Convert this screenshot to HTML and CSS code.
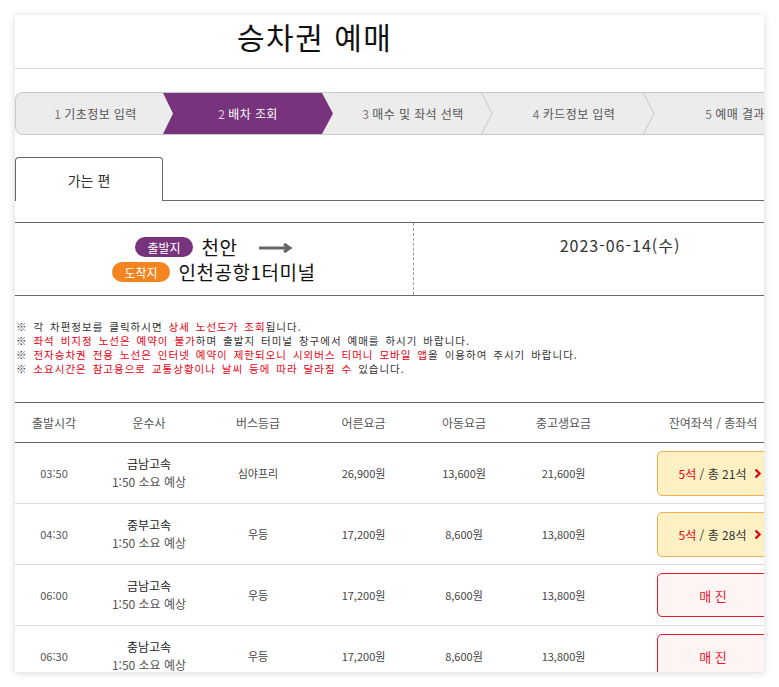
FILE: index.html
```html
<!DOCTYPE html>
<html lang="ko">
<head>
<meta charset="utf-8">
<title>승차권 예매</title>
<link rel="stylesheet" href="styles.css">
</head>
<body>
<div class="card">
  <div class="content">
    <h1 class="title">승차권 예매</h1>

    <ol class="steps">
      <li class="step step-first"><span class="num">1</span>기초정보 입력</li>
      <li class="step active"><span class="num">2</span>배차 조회</li>
      <li class="step"><span class="num">3</span>매수 및 좌석 선택<svg class="sep" viewBox="0 0 12 41" preserveAspectRatio="none"><polyline points="0.5,0 11,20.5 0.5,41"/></svg></li>
      <li class="step step-4"><span class="num">4</span>카드정보 입력<svg class="sep" viewBox="0 0 12 41" preserveAspectRatio="none"><polyline points="0.5,0 11,20.5 0.5,41"/></svg></li>
      <li class="step"><span class="num">5</span>예매 결과</li>
    </ol>

    <div class="tabs">
      <div class="tab">가는 편</div>
    </div>

    <div class="route">
      <div class="route-left">
        <div class="route-line">
          <span class="badge badge-dep">출발지</span>
          <span class="place">천안</span>
          <svg class="arrow" viewBox="0 0 34 10" width="34" height="10"><line x1="0" y1="5" x2="29" y2="5"/><polyline points="25,1 31,5 25,9"/></svg>
        </div>
        <div class="route-line">
          <span class="badge badge-arr">도착지</span>
          <span class="place">인천공항1터미널</span>
        </div>
      </div>
      <div class="route-right">2023-06-14(수)</div>
    </div>

    <ul class="notes">
      <li>※ 각 차편정보를 클릭하시면 <em>상세 노선도가 조회</em>됩니다.</li>
      <li>※ <em>좌석 비지정 노선은 예약이 불가</em>하며 출발지 터미널 창구에서 예매를 하시기 바랍니다.</li>
      <li>※ <em>전자승차권 전용 노선은 인터넷 예약이 제한되오니 시외버스 티머니 모바일 앱</em>을 이용하여 주시기 바랍니다.</li>
      <li>※ <em>소요시간은 참고용으로 교통상황이나 날씨 등에 따라 달라질 수</em> 있습니다.</li>
    </ul>

    <div class="table">
      <div class="row head">
        <div>출발시각</div><div>운수사</div><div>버스등급</div><div>어른요금</div><div>아동요금</div><div>중고생요금</div><div>잔여좌석 / 총좌석</div>
      </div>
      <div class="row">
        <div class="time">03:50</div>
        <div class="company"><b>금남고속</b><span>1:50 소요 예상</span></div>
        <div class="cell">심야프리</div>
        <div class="cell">26,900원</div>
        <div class="cell">13,600원</div>
        <div class="cell">21,600원</div>
        <div class="seat-cell"><a class="seat"><em>5석</em>&nbsp;/ 총 21석<svg class="chev" viewBox="0 0 7 11" width="7" height="11"><polyline points="1.5,1.5 5.5,5.5 1.5,9.5"/></svg></a></div>
      </div>
      <div class="row">
        <div class="time">04:30</div>
        <div class="company"><b>중부고속</b><span>1:50 소요 예상</span></div>
        <div class="cell">우등</div>
        <div class="cell">17,200원</div>
        <div class="cell">8,600원</div>
        <div class="cell">13,800원</div>
        <div class="seat-cell"><a class="seat"><em>5석</em>&nbsp;/ 총 28석<svg class="chev" viewBox="0 0 7 11" width="7" height="11"><polyline points="1.5,1.5 5.5,5.5 1.5,9.5"/></svg></a></div>
      </div>
      <div class="row">
        <div class="time">06:00</div>
        <div class="company"><b>금남고속</b><span>1:50 소요 예상</span></div>
        <div class="cell">우등</div>
        <div class="cell">17,200원</div>
        <div class="cell">8,600원</div>
        <div class="cell">13,800원</div>
        <div class="seat-cell"><span class="sold">매 진</span></div>
      </div>
      <div class="row">
        <div class="time">06:30</div>
        <div class="company"><b>충남고속</b><span>1:50 소요 예상</span></div>
        <div class="cell">우등</div>
        <div class="cell">17,200원</div>
        <div class="cell">8,600원</div>
        <div class="cell">13,800원</div>
        <div class="seat-cell"><span class="sold">매 진</span></div>
      </div>
    </div>
  </div>
</div>
</body>
</html>
```

FILE: styles.css
```css
* { box-sizing: border-box; }

html, body {
  margin: 0;
  background: #fff;
}

body {
  padding: 15px;
  font-family: "Noto Sans CJK KR", "Noto Sans", sans-serif;
  color: #333;
}

.card {
  width: 749px;
  height: 657px;
  background: #fff;
  overflow: hidden;
  box-shadow: 0 1px 7px rgba(0, 0, 0, 0.16);
}

.content {
  width: 811px;
}

.title {
  margin: 0;
  height: 54px;
  padding: 0 0 0 222px;
  font-size: 30px;
  line-height: 43px;
  font-weight: 400;
  letter-spacing: 1.5px;
  word-spacing: 0;
  color: #111;
  border-bottom: 1px solid #ddd;
}

/* steps */
.steps {
  list-style: none;
  margin: 23px 0 0;
  padding: 0;
  display: flex;
  height: 43px;
  background: #ececec;
  border: 1px solid #c9c9c9;
  border-right: none;
  border-radius: 8px 0 0 8px;
}

.step {
  position: relative;
  flex: none;
  width: 160px;
  display: flex;
  align-items: center;
  justify-content: center;
  font-size: 12px;
  letter-spacing: 0.4px;
  color: #555;
  white-space: nowrap;
}

.step .num {
  margin-right: 3px;
  color: #777;
}

.step-first {
  width: 147px;
  padding-left: 12px;
}

.step-4 { width: 162px; }

.step.active {
  width: 170px;
  background: #77337b;
  color: #fff;
  clip-path: polygon(0 0, calc(100% - 11px) 0, 100% 50%, calc(100% - 11px) 100%, 0 100%, 10px 50%);
}

.step.active .num { color: #e3c3ea; }

.sep {
  position: absolute;
  right: 0;
  top: 0;
  width: 12px;
  height: 100%;
}

.sep polyline {
  fill: none;
  stroke: #c6c6c6;
  stroke-width: 1;
}

/* tabs */
.tabs {
  margin-top: 22px;
  display: flex;
  border-bottom: 1px solid #666;
}

.tab {
  width: 148px;
  height: 44px;
  margin-bottom: -1px;
  background: #fff;
  border: 1px solid #666;
  border-bottom: none;
  border-radius: 4px 4px 0 0;
  display: flex;
  align-items: center;
  justify-content: center;
  font-size: 14px;
  color: #333;
}

/* route */
.route {
  margin-top: 21px;
  display: grid;
  grid-template-columns: 399px 1fr;
  height: 74px;
  border-top: 1px solid #666;
  border-bottom: 1px solid #666;
}

.route-left {
  border-right: 1px dashed #999;
  display: flex;
  flex-direction: column;
  align-items: center;
  gap: 5px;
  padding-top: 14px;
}

.route-line {
  display: flex;
  align-items: center;
  height: 20px;
}

.badge {
  display: inline-flex;
  align-items: center;
  justify-content: center;
  height: 20px;
  padding: 0 12px;
  border-radius: 10px;
  color: #fff;
  font-size: 12px;
}

.badge-dep { background: #77337b; }
.badge-arr { background: #f3841f; }

.place {
  margin-left: 9px;
  font-size: 19px;
  letter-spacing: 0.5px;
  color: #111;
  line-height: 20px;
}

.arrow {
  margin-left: 21px;
  margin-top: 1px;
}

.arrow line, .arrow polyline {
  fill: none;
  stroke: #666;
  stroke-width: 3;
}

.route-right {
  text-align: center;
  padding-top: 12px;
  font-size: 16px;
  line-height: 20px;
  letter-spacing: 1px;
  color: #333;
}

/* notes */
.notes {
  list-style: none;
  margin: 24px 0 0;
  padding: 0 0 0 1px;
  font-size: 10.5px;
  line-height: 14px;
  letter-spacing: 1px;
  word-spacing: 2px;
  color: #333;
}

.notes li {
  height: 14px;
  white-space: nowrap;
}

.notes em {
  font-style: normal;
  color: #e60012;
}

/* table */
.table {
  margin-top: 26px;
  border-top: 1px solid #666;
}

.row {
  display: grid;
  grid-template-columns: 78px 112px 106px 105px 96px 103px 196px;
  align-items: center;
  height: 61px;
  border-bottom: 1px solid #ddd;
  text-align: center;
  font-size: 11px;
  color: #444;
}

.row.head {
  height: 40px;
  border-bottom: 1px solid #666;
  font-size: 12px;
  color: #555;
}

.time { color: #555; }

.company {
  display: flex;
  flex-direction: column;
  line-height: 18px;
}

.company b {
  font-weight: 400;
  font-size: 12px;
  color: #222;
}

.company span {
  font-size: 12px;
  color: #555;
}

.seat-cell {
  display: flex;
  justify-content: center;
}

.seat, .sold {
  width: 112px;
  height: 45px;
  border-radius: 5px;
  display: flex;
  align-items: center;
  justify-content: center;
}

.seat {
  background: #fdf0c2;
  border: 1px solid #f3ad52;
  font-size: 12px;
  color: #333;
  padding-left: 14px;
  white-space: nowrap;
}

.seat em {
  font-style: normal;
  color: #e60012;
}

.chev {
  margin-left: 8px;
}

.chev polyline {
  fill: none;
  stroke: #e60012;
  stroke-width: 2.4;
}

.sold {
  height: 44px;
  background: #fef4f4;
  border: 1px solid #e8192c;
  color: #e8192c;
  font-size: 13px;
}
```
